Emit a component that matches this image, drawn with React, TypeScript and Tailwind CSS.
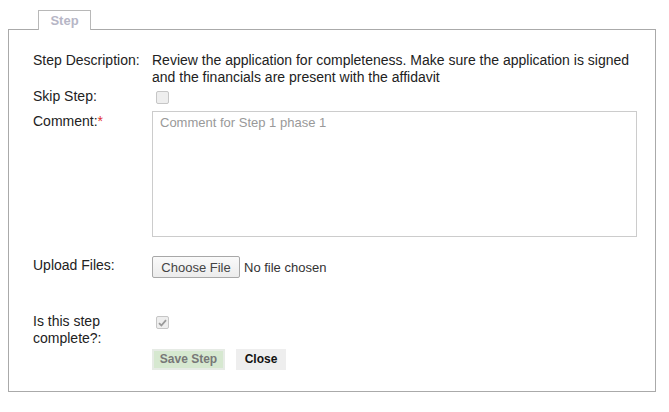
const font = { fontFamily: '"Liberation Sans", Arial, sans-serif' };

function CheckBox({ checked }: { checked?: boolean }) {
  return (
    <span className="flex h-[13px] w-[13px] items-center justify-center rounded-[2px] border border-[#c6c6c6] bg-[#eeeeee]">
      {checked && (
        <svg width="9" height="8" viewBox="0 0 9 8">
          <path d="M1 4.2 L3.4 6.5 L8 1.2" fill="none" stroke="#9a9a9a" strokeWidth="1.8" />
        </svg>
      )}
    </span>
  );
}

export default function App() {
  return (
    <div className="h-[412px] w-[669px] bg-white pl-[8px] pt-[10px] text-[14px] leading-[17px] text-[#222]" style={font}>
      <div className="relative z-10 -mb-px ml-[30px] flex h-[20px] w-[53px] items-center justify-center border border-b-0 border-[#b8b8b8] bg-white text-[13px] font-bold text-[#b6b6c6]">
        Step
      </div>
      <div className="h-[363px] w-[648px] border border-[#aaaaaa] pl-[24px] pt-[22px]">
        <div className="flex">
          <div className="w-[119px] shrink-0">Step Description:</div>
          <div className="w-[490px]">
            Review the application for completeness. Make sure the application is signed and the financials are present with the affidavit
          </div>
        </div>

        <div className="mt-[2px] flex">
          <div className="w-[119px] shrink-0">Skip Step:</div>
          <div className="pl-[4px] pt-[3px]">
            <CheckBox />
          </div>
        </div>

        <div className="mt-[6px] flex">
          <div className="w-[119px] shrink-0 pt-[2px]">
            Comment:<span className="text-[#e03030]">*</span>
          </div>
          <div className="h-[126px] w-[485px] border border-[#cccccc] px-[7px] pt-[2px] text-[13px] text-[#999999]">
            Comment for Step 1 phase 1
          </div>
        </div>

        <div className="mt-[19px] flex">
          <div className="w-[119px] shrink-0 pt-[1px]">Upload Files:</div>
          <div className="flex items-center gap-[4px] text-[13px]">
            <span className="flex h-[22px] w-[88px] items-center justify-center rounded-[2px] border border-[#a8a8a8] bg-gradient-to-b from-[#fafafa] to-[#ececec] text-[#444]">
              Choose File
            </span>
            <span className="text-[#333]">No file chosen</span>
          </div>
        </div>

        <div className="mt-[35px] flex">
          <div className="w-[119px] shrink-0 pr-[10px]">Is this step complete?:</div>
          <div className="pl-[4px] pt-[3px]">
            <CheckBox checked />
          </div>
        </div>

        <div className="ml-[119px] mt-[2px] flex gap-[11px] text-[12px] font-bold">
          <span className="flex h-[21px] w-[73px] items-center justify-center border-2 border-[#e6ebe5] bg-[#d6e8d0] text-[#777777]">
            Save Step
          </span>
          <span className="flex h-[21px] w-[50px] items-center justify-center bg-[#eeeeee] text-[#111]">
            Close
          </span>
        </div>
      </div>
    </div>
  );
}
